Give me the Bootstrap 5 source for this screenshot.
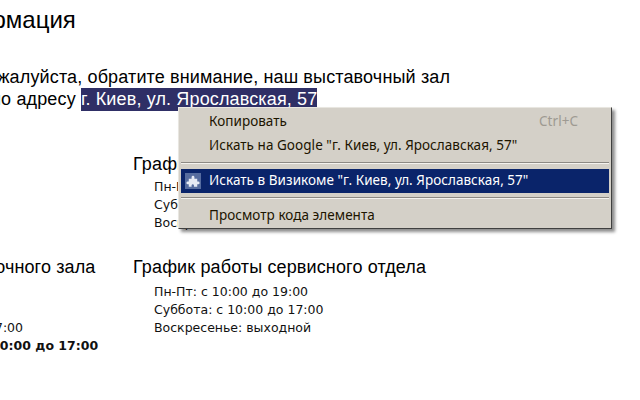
<!doctype html>
<html lang="ru">
<head>
<meta charset="utf-8">
<title>Контактная информация</title>
<link rel="stylesheet" href="https://cdn.jsdelivr.net/npm/bootstrap@5.3.0/dist/css/bootstrap.min.css">
<style>
html,body{height:400px;overflow:hidden;background:#fff}
body{font-family:"Liberation Sans",Arial,sans-serif;color:#000;position:relative}
.sheet{width:900px;margin-left:-192px;padding-top:4px}
.ttl{font-size:24px;line-height:32px;font-weight:400;margin:0 0 30px -8px;white-space:nowrap}
.para{font-size:18px;line-height:22px;margin:0;width:700px;white-space:nowrap;letter-spacing:.14px}
.para span{background:#2f2f66;color:#fff;padding:1px 0 2px}
.ln1{padding-left:9px}
.ln2{padding-left:3px}
.hours{display:flex}
.hours-a{margin-top:43px}
.hours-a .sched{margin-top:-2px;margin-bottom:2px}
.hours-b{margin-top:22px}
.colL{width:325px;flex:none}
.colS{margin-left:-7px;width:332px;flex:none}
.colH{font-size:18px;line-height:22px;margin:0 0 5px;font-weight:400;letter-spacing:.13px;white-space:nowrap}
.sched{font-family:"DejaVu Sans",Verdana,sans-serif;font-size:12.5px;line-height:18px;padding-left:21px;color:#111;min-height:54px}
.sched div{white-space:nowrap}
.sched .ln-r{margin-left:-4px}
.sched .ln-b{margin-left:11px}
.ctx{position:absolute;left:178px;top:107px;width:434px;height:122px;background:#d4d0c8;border:1px solid;border-color:#e8e6e0 #404040 #404040 #e8e6e0;box-shadow:3px 3px 3px rgba(0,0,0,.45);padding:2px;font-family:"Noto Sans",Tahoma,sans-serif;font-size:13.5px;letter-spacing:.04px;color:#1c1400}
.ctx-i{height:24px;display:flex;align-items:center;justify-content:space-between;padding:0 31px 2px 28px;white-space:nowrap}
.ctx-i.on{background:#0a246a;color:#fff;position:relative}
.ctx-sep{height:2px;margin:4px 0 5px;background:#8c8984;border-bottom:1px solid #f4f2ee}
.ctx-g{color:#9e9a92}
.ctx-ico{position:absolute;left:4px;top:4px;width:16px;height:16px}
</style>
</head>
<body>
<div class="sheet">
  <h1 class="ttl">Контактная информация</h1>
  <div class="para">
    <div class="ln1">Уважаемый гость! Пожалуйста, обратите внимание, наш выставочный зал</div>
    <div class="ln2">временно находится по адресу <span>г. Киев, ул. Ярославская, 57</span></div>
  </div>
  <div class="hours hours-a">
    <div class="colL"><h2 class="colH">График работы</h2></div>
    <div><h2 class="colH">График работы сервисного отдела</h2>
      <div class="sched"><div>Пн-Пт: с 10:00 до 19:00</div><div>Суббота: с 10:00 до 17:00</div><div>Воскресенье: выходной</div></div>
    </div>
  </div>
  <div class="hours hours-b">
    <div class="colS"><h2 class="colH">График работы выставочного зала</h2>
      <div class="sched"><div>Будни:</div><div>Суббота:</div><div class="ln-r">Праздничные: с 10:00 до 17:00</div><div class="ln-b"><b>Субб.-Воскресенье: с 10:00 до 17:00</b></div></div>
    </div>
    <div><h2 class="colH">График работы сервисного отдела</h2>
      <div class="sched"><div>Пн-Пт: с 10:00 до 19:00</div><div>Суббота: с 10:00 до 17:00</div><div>Воскресенье: выходной</div></div>
    </div>
  </div>
</div>
<div class="ctx">
  <div class="ctx-i"><span>Копировать</span><span class="ctx-g">Ctrl+C</span></div>
  <div class="ctx-i"><span>Искать на Google "г. Киев, ул. Ярославская, 57"</span></div>
  <div class="ctx-sep"></div>
  <div class="ctx-i on">
    <svg class="ctx-ico" viewBox="0 0 17 17"><rect width="17" height="17" fill="#566c9f"/><path d="M4 6h3V4.500a1.500 1.500 0 0 1 3 0V6h3v3h1a1.500 1.500 0 0 1 0 3h-1v2.500H9.500V13a1.300 1.300 0 0 0-2.500 0v1.500H4V12H3a1.500 1.500 0 0 1 0-3h1z" fill="#e6eaf4"/></svg>
    <span>Искать в Визикоме "г. Киев, ул. Ярославская, 57"</span></div>
  <div class="ctx-sep"></div>
  <div class="ctx-i"><span>Просмотр кода элемента</span></div>
</div>
</body>
</html>
